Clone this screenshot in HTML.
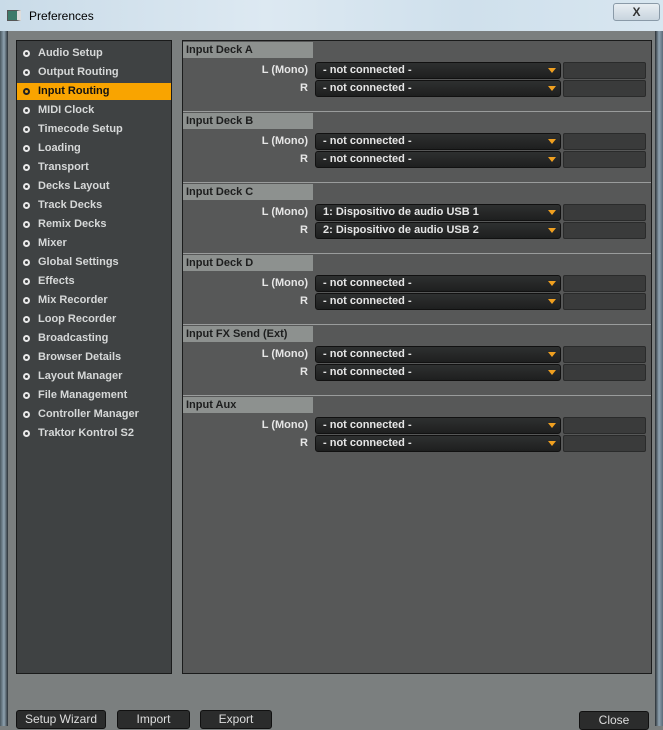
<!DOCTYPE html>
<html><head><meta charset="utf-8"><style>
*{margin:0;padding:0;box-sizing:border-box}
body{width:663px;height:726px;overflow:hidden;position:relative;font-family:"Liberation Sans",sans-serif;background:#7b7f7f}
.top{position:absolute;left:0;top:0;width:663px;height:31px;background:linear-gradient(90deg,#c9dbe8,#dde9f2 40%,#cfe0ec 70%,#d8e6f0);}
.ttl{position:absolute;left:29px;top:9px;font-size:12px;color:#000}
.ico{position:absolute;left:7px;top:10px;width:14px;height:11px;background:#3d7a6a;border:1px solid #555;border-right:4px solid #ddd}
.xb{position:absolute;left:613px;top:3px;width:47px;height:18px;border:1px solid #8a9aa8;border-radius:3px;background:linear-gradient(#e8eef3,#c8d4de);text-align:center;font-weight:bold;font-size:12px;color:#333;line-height:16px}
.lb{position:absolute;left:0;top:31px;width:8px;height:695px;background:linear-gradient(90deg,#4a5860,#8ea2b0,#2a3035)}
.rb{position:absolute;left:655px;top:31px;width:8px;height:695px;background:linear-gradient(90deg,#2a3035,#8ea2b0,#5a6a78)}
.side{position:absolute;left:16px;top:40px;width:156px;height:634px;background:#3f4243;border:1px solid #1a1b1b}
.it{position:absolute;left:0;width:154px;height:17px;color:#d6d8d8;font-size:11px;font-weight:bold;line-height:17px;padding-left:21px}
.it::before{content:"";position:absolute;left:6px;top:5px;width:3px;height:3px;border:2px solid #e8e8e8;border-radius:50%}
.it.sel{background:#f9a400;color:#111}
.it.sel::before{border-color:#222}
.main{position:absolute;left:182px;top:40px;width:470px;height:634px;background:#575858;border:1px solid #1a1b1b}
.sec{position:absolute;left:0;width:468px;height:71px;border-bottom:1px solid #9a9c9c}
.hd{position:absolute;left:0;top:1px;width:130px;height:16px;background:#8d918f;font-size:11px;font-weight:bold;color:#1d1e1e;line-height:16px;padding-left:3px}
.lab{position:absolute;right:343px;width:120px;text-align:right;font-size:11px;font-weight:bold;color:#e6e6e6;line-height:17px}
.dd{position:absolute;left:132px;width:246px;height:17px;background:linear-gradient(#2e3030,#1e1f1f);border:1px solid #111;border-radius:3px;color:#e6e6e6;font-size:11px;font-weight:bold;line-height:15px;padding-left:7px}
.dd::after{content:"";position:absolute;right:4px;top:5px;border-left:4px solid transparent;border-right:4px solid transparent;border-top:5px solid #f0a020}
.bx{position:absolute;left:380px;width:83px;height:17px;background:#3a3b3b;border:1px solid #2a2b2b;border-radius:2px}
.btn{position:absolute;top:710px;height:19px;background:#2b2c2c;border:1px solid #111;border-radius:3px;color:#ddd;font-size:12px;text-align:center;line-height:17px}
</style></head><body>
<div class="top"></div><div class="ico"></div><div class="ttl">Preferences</div><div class="xb">X</div>
<div class="lb"></div><div class="rb"></div>
<div class="side">
<div class="it" style="top:4px">Audio Setup</div>
<div class="it" style="top:23px">Output Routing</div>
<div class="it sel" style="top:42px">Input Routing</div>
<div class="it" style="top:61px">MIDI Clock</div>
<div class="it" style="top:80px">Timecode Setup</div>
<div class="it" style="top:99px">Loading</div>
<div class="it" style="top:118px">Transport</div>
<div class="it" style="top:137px">Decks Layout</div>
<div class="it" style="top:156px">Track Decks</div>
<div class="it" style="top:175px">Remix Decks</div>
<div class="it" style="top:194px">Mixer</div>
<div class="it" style="top:213px">Global Settings</div>
<div class="it" style="top:232px">Effects</div>
<div class="it" style="top:251px">Mix Recorder</div>
<div class="it" style="top:270px">Loop Recorder</div>
<div class="it" style="top:289px">Broadcasting</div>
<div class="it" style="top:308px">Browser Details</div>
<div class="it" style="top:327px">Layout Manager</div>
<div class="it" style="top:346px">File Management</div>
<div class="it" style="top:365px">Controller Manager</div>
<div class="it" style="top:384px">Traktor Kontrol S2</div>
</div>
<div class="main">
<div class="sec" style="top:0"><div class="hd">Input Deck A</div>
<div class="lab" style="top:21px">L (Mono)</div><div class="dd" style="top:21px">- not connected -</div><div class="bx" style="top:21px"></div>
<div class="lab" style="top:39px">R</div><div class="dd" style="top:39px">- not connected -</div><div class="bx" style="top:39px"></div></div>
<div class="sec" style="top:71px"><div class="hd">Input Deck B</div>
<div class="lab" style="top:21px">L (Mono)</div><div class="dd" style="top:21px">- not connected -</div><div class="bx" style="top:21px"></div>
<div class="lab" style="top:39px">R</div><div class="dd" style="top:39px">- not connected -</div><div class="bx" style="top:39px"></div></div>
<div class="sec" style="top:142px"><div class="hd">Input Deck C</div>
<div class="lab" style="top:21px">L (Mono)</div><div class="dd" style="top:21px">1: Dispositivo de audio USB 1</div><div class="bx" style="top:21px"></div>
<div class="lab" style="top:39px">R</div><div class="dd" style="top:39px">2: Dispositivo de audio USB 2</div><div class="bx" style="top:39px"></div></div>
<div class="sec" style="top:213px"><div class="hd">Input Deck D</div>
<div class="lab" style="top:21px">L (Mono)</div><div class="dd" style="top:21px">- not connected -</div><div class="bx" style="top:21px"></div>
<div class="lab" style="top:39px">R</div><div class="dd" style="top:39px">- not connected -</div><div class="bx" style="top:39px"></div></div>
<div class="sec" style="top:284px"><div class="hd">Input FX Send (Ext)</div>
<div class="lab" style="top:21px">L (Mono)</div><div class="dd" style="top:21px">- not connected -</div><div class="bx" style="top:21px"></div>
<div class="lab" style="top:39px">R</div><div class="dd" style="top:39px">- not connected -</div><div class="bx" style="top:39px"></div></div>
<div class="sec" style="top:355px;border-bottom:none"><div class="hd">Input Aux</div>
<div class="lab" style="top:21px">L (Mono)</div><div class="dd" style="top:21px">- not connected -</div><div class="bx" style="top:21px"></div>
<div class="lab" style="top:39px">R</div><div class="dd" style="top:39px">- not connected -</div><div class="bx" style="top:39px"></div></div>
</div>
<div class="btn" style="left:16px;width:90px">Setup Wizard</div>
<div class="btn" style="left:117px;width:73px">Import</div>
<div class="btn" style="left:200px;width:72px">Export</div>
<div class="btn" style="left:579px;width:70px;top:711px">Close</div>
</body></html>
